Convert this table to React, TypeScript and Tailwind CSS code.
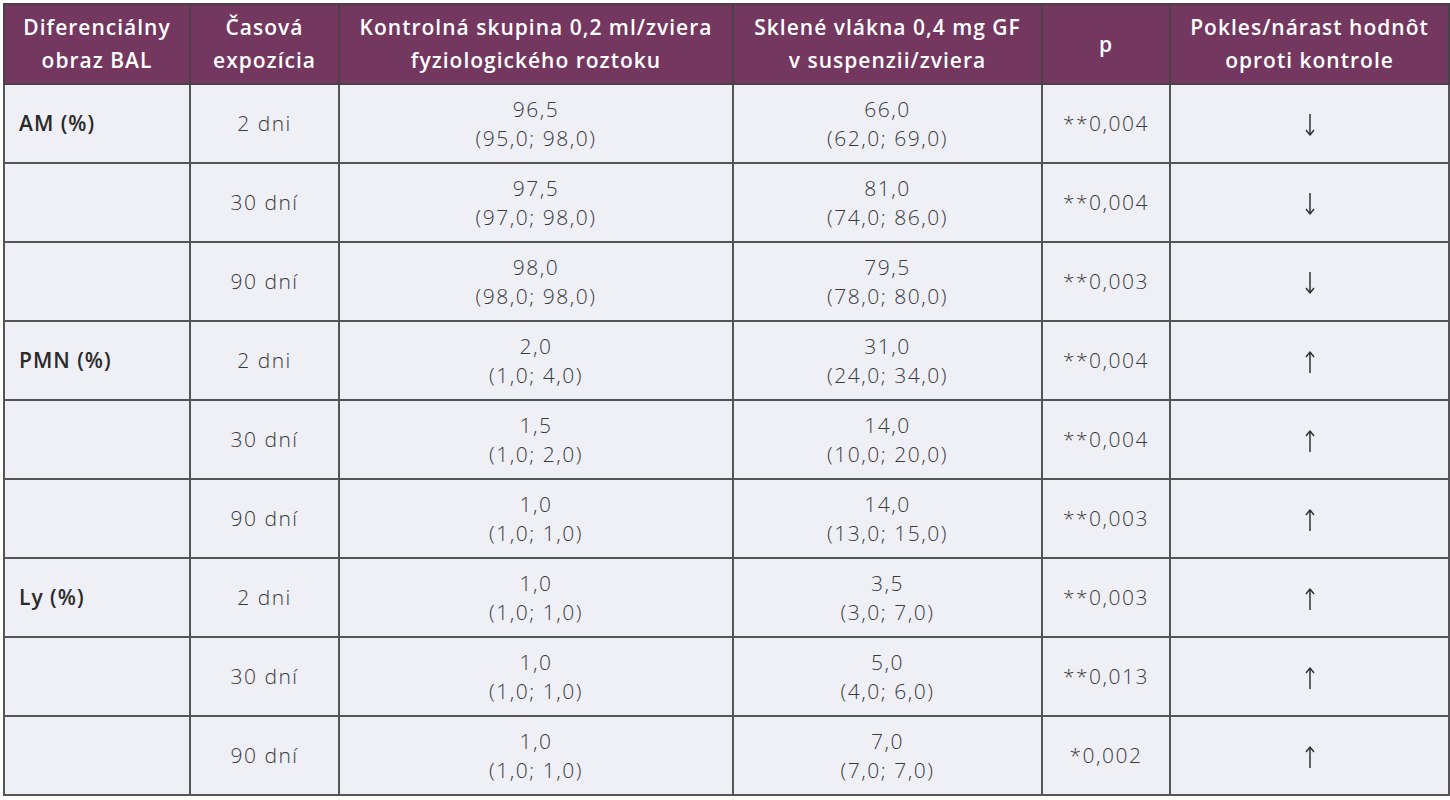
const rows = [
  { label: 'AM (%)', time: '2 dni', ctrl: ['96,5', '(95,0; 98,0)'], gf: ['66,0', '(62,0; 69,0)'], p: '**0,004', up: false },
  { label: '', time: '30 dní', ctrl: ['97,5', '(97,0; 98,0)'], gf: ['81,0', '(74,0; 86,0)'], p: '**0,004', up: false },
  { label: '', time: '90 dní', ctrl: ['98,0', '(98,0; 98,0)'], gf: ['79,5', '(78,0; 80,0)'], p: '**0,003', up: false },
  { label: 'PMN (%)', time: '2 dni', ctrl: ['2,0', '(1,0; 4,0)'], gf: ['31,0', '(24,0; 34,0)'], p: '**0,004', up: true },
  { label: '', time: '30 dní', ctrl: ['1,5', '(1,0; 2,0)'], gf: ['14,0', '(10,0; 20,0)'], p: '**0,004', up: true },
  { label: '', time: '90 dní', ctrl: ['1,0', '(1,0; 1,0)'], gf: ['14,0', '(13,0; 15,0)'], p: '**0,003', up: true },
  { label: 'Ly (%)', time: '2 dni', ctrl: ['1,0', '(1,0; 1,0)'], gf: ['3,5', '(3,0; 7,0)'], p: '**0,003', up: true },
  { label: '', time: '30 dní', ctrl: ['1,0', '(1,0; 1,0)'], gf: ['5,0', '(4,0; 6,0)'], p: '**0,013', up: true },
  { label: '', time: '90 dní', ctrl: ['1,0', '(1,0; 1,0)'], gf: ['7,0', '(7,0; 7,0)'], p: '*0,002', up: true },
];

const th = 'border-2 border-[#4a4048] px-2 text-center align-middle font-semibold tracking-[1px]';
const td = 'border-2 border-[#555] px-2 text-center align-middle';

// thin arrow like the one in the source table
function Arrow({ up }: { up: boolean }) {
  return (
    <svg width="12" height="24" viewBox="0 0 12 24" className={`inline-block ${up ? '' : 'rotate-180'}`}>
      <path d="M6 2 V23 M2 7 L6 2 L10 7" fill="none" stroke="#333" strokeWidth="1.5" strokeLinejoin="round" />
    </svg>
  );
}

export default function App() {
  return (
    <div className="min-h-screen bg-white pl-[3px] pt-[3px] font-['Open_Sans',sans-serif] text-[21px]">
      <table className="table-fixed border-collapse w-[1445px]">
        <colgroup>
          <col className="w-[186px]" />
          <col className="w-[149px]" />
          <col className="w-[394px]" />
          <col className="w-[309px]" />
          <col className="w-[128px]" />
          <col className="w-[279px]" />
        </colgroup>
        <thead>
          <tr className="h-[80px] bg-[#74375f] text-white leading-[33px]">
            <th className={th}>Diferenciálny<br />obraz BAL</th>
            <th className={th}>Časová<br />expozícia</th>
            <th className={th}>Kontrolná skupina 0,2 ml/zviera<br />fyziologického roztoku</th>
            <th className={th}>Sklené vlákna 0,4 mg GF<br />v suspenzii/zviera</th>
            <th className={th}>p</th>
            <th className={th}>Pokles/nárast hodnôt<br />oproti kontrole</th>
          </tr>
        </thead>
        <tbody className="bg-[#efeff6] text-[#3a3a3a] font-light leading-[29px] tracking-[1.5px]">
          {rows.map((r, i) => (
            <tr key={i} className="h-[79px]">
              <td className="border-2 border-[#555] pl-[14px] text-left align-middle font-semibold tracking-[1px] text-[#2a2a2a]">{r.label}</td>
              <td className={td}>{r.time}</td>
              <td className={td}>{r.ctrl[0]}<br />{r.ctrl[1]}</td>
              <td className={td}>{r.gf[0]}<br />{r.gf[1]}</td>
              <td className={td}>{r.p}</td>
              <td className={td}><Arrow up={r.up} /></td>
            </tr>
          ))}
        </tbody>
      </table>
    </div>
  );
}
